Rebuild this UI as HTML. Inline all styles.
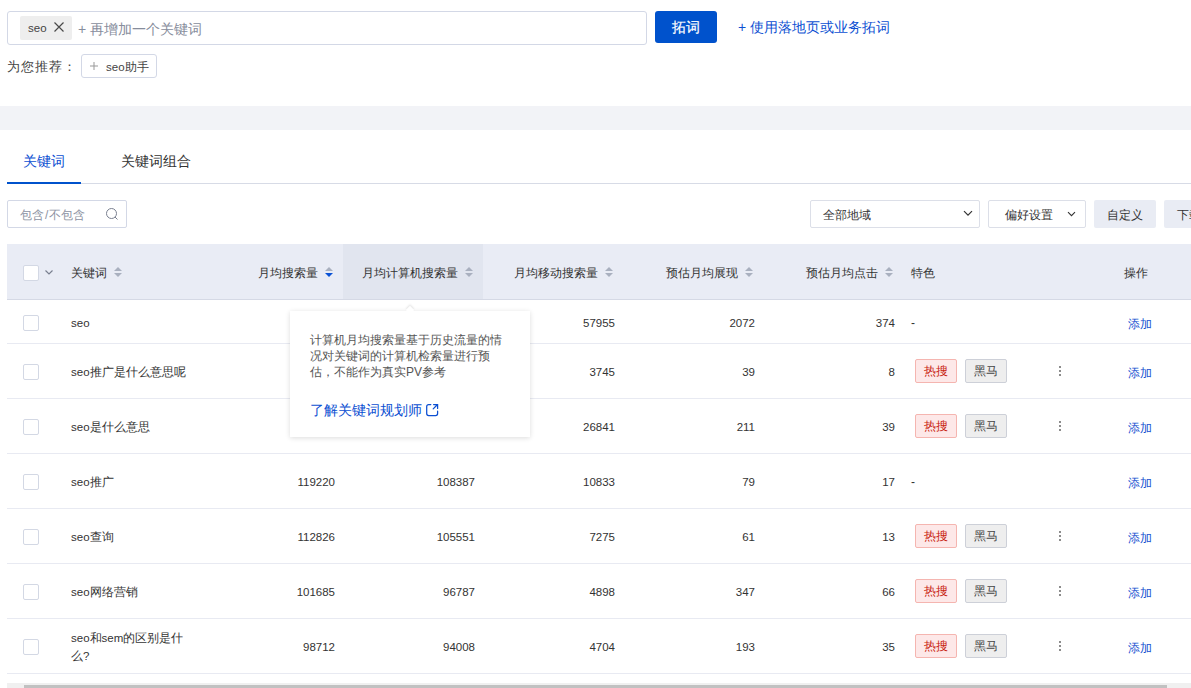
<!DOCTYPE html>
<html><head><meta charset="utf-8">
<style>
*{box-sizing:border-box;margin:0;padding:0}
html,body{width:1191px;height:688px;overflow:hidden;background:#fff;font-family:"Liberation Sans",sans-serif;color:#333;font-size:12px}
.a{position:absolute;white-space:nowrap}
.inp{left:7px;top:11px;width:640px;height:34px;border:1px solid #d3d8e6;border-radius:3px}
.tag{left:20px;top:16px;width:52px;height:24px;background:#eeeeee;border-radius:2px}
.btn{left:655px;top:11px;width:62px;height:32px;background:#0052cc;border-radius:3px;color:#fff;font-size:14px;text-align:center;line-height:32px;-webkit-text-stroke:0.2px #fff}
.band{left:0;top:106px;width:1191px;height:24px;background:#f2f3f7}
.tabline{left:7px;top:183px;width:1184px;height:1px;background:#d7dbe6}
.tabact{left:7px;top:182px;width:74px;height:2px;background:#0052cc}
.search{left:7px;top:200px;width:120px;height:28px;border:1px solid #d3d8e6;border-radius:2px}
.sel{top:200px;height:28px;border:1px solid #dcdfe8;border-radius:2px}
.gbtn{top:200px;height:28px;background:#e9ecf4;border-radius:2px}
.thead{left:7px;top:244px;width:1184px;height:56px;background:#e9ecf5;border-bottom:1px solid #d5d9e5}
.sortcol{left:343px;top:244px;width:140px;height:55px;background:#e1e5ef}
.rowline{left:7px;width:1184px;height:1px;background:#e8eaf2}
.cb{left:23px;width:16px;height:16px;border:1px solid #d3d8e4;border-radius:2px;background:#fff}
.th{top:265px;font-size:12px;color:#333;line-height:16px}
.td{font-size:12px;color:#333;line-height:16px}
.num{text-align:right;width:120px;font-size:11.5px;margin-top:1px}
.l{font-size:11.5px}
.hot{left:915px;width:42px;height:24px;background:#fde8e8;border:1px solid #f5b5b0;border-radius:2px;color:#c8200e;text-align:center;line-height:22px;font-size:12px}
.dark{left:965px;width:42px;height:24px;background:#eeeeee;border:1px solid #cdd0d8;border-radius:2px;color:#444;text-align:center;line-height:22px;font-size:12px}
.add{left:1128px;color:#1450d0;font-size:12px;line-height:16px}
.dots{left:1059px;width:2px}
.dots i{display:block;width:2px;height:2px;background:#8c8c8c;margin-bottom:2px}
.link{color:#0c4fd2}
</style></head><body>
<!-- top input -->
<div class="a inp"></div>
<div class="a tag"></div>
<div class="a" style="left:28px;top:20px;font-size:11.5px;line-height:16px;color:#444">seo</div>
<svg class="a" style="left:53px;top:21px" width="12" height="12" viewBox="0 0 12 12"><path d="M1.5 1.5L10.5 10.5M10.5 1.5L1.5 10.5" stroke="#4a4a4a" stroke-width="1.2"/></svg>
<div class="a" style="left:78px;top:20px;font-size:14px;line-height:18px;color:#878d9c">+ 再增加一个关键词</div>
<div class="a btn">拓词</div>
<div class="a link" style="left:738px;top:18px;font-size:14px;line-height:18px">+ 使用落地页或业务拓词</div>
<!-- recommend -->
<div class="a" style="left:7px;top:58px;font-size:13px;line-height:18px;color:#444;letter-spacing:1px">为您推荐：</div>
<div class="a" style="left:81px;top:54px;width:76px;height:24px;border:1px solid #d3d8e6;border-radius:3px"></div>
<svg class="a" style="left:90px;top:62px" width="8" height="8" viewBox="0 0 8 8"><path d="M4 0V8M0 4H8" stroke="#999" stroke-width="1"/></svg>
<div class="a" style="left:106px;top:59px;font-size:12px;line-height:16px;color:#444"><span class="l">seo</span>助手</div>

<div class="a band"></div>
<!-- tabs -->
<div class="a" style="left:23px;top:152px;font-size:14px;line-height:18px;color:#0c4fd2">关键词</div>
<div class="a" style="left:121px;top:152px;font-size:14px;line-height:18px;color:#333">关键词组合</div>
<div class="a tabline"></div>
<div class="a tabact"></div>
<!-- filter bar -->
<div class="a search"></div>
<div class="a" style="left:20px;top:207px;font-size:12px;line-height:16px;color:#8d93a3">包含<span style="margin:0 1px 0 1px">/</span>不包含</div>
<svg class="a" style="left:105px;top:207px" width="14" height="14" viewBox="0 0 14 14"><circle cx="6.5" cy="6.5" r="5" fill="none" stroke="#7a8090" stroke-width="1"/><path d="M10 10L12.5 12.5" stroke="#7a8090" stroke-width="1"/></svg>

<div class="a sel" style="left:810px;width:170px"></div>
<div class="a" style="left:823px;top:207px;font-size:12px;line-height:16px;color:#333">全部地域</div>
<svg class="a" style="left:963px;top:210px" width="10" height="7" viewBox="0 0 10 7"><path d="M1 1.2L5 5.2L9 1.2" fill="none" stroke="#333" stroke-width="1.2"/></svg>
<div class="a sel" style="left:988px;width:98px"></div>
<div class="a" style="left:1005px;top:207px;font-size:12px;line-height:16px;color:#333">偏好设置</div>
<svg class="a" style="left:1067px;top:211px" width="9" height="6" viewBox="0 0 9 6"><path d="M1 1.2L4.5 4.7L8 1.2" fill="none" stroke="#333" stroke-width="1.1"/></svg>
<div class="a gbtn" style="left:1094px;width:62px"></div>
<div class="a" style="left:1107px;top:207px;font-size:12px;line-height:16px;color:#333">自定义</div>
<div class="a gbtn" style="left:1164px;width:62px"></div>
<div class="a" style="left:1177px;top:207px;font-size:12px;line-height:16px;color:#333">下载</div>

<!-- table head -->
<div class="a thead"></div>
<div class="a sortcol"></div>
<div class="a cb" style="top:265px"></div>
<svg class="a" style="left:45px;top:270px" width="8" height="5" viewBox="0 0 8 5"><path d="M0.5 0.5L4 4L7.5 0.5" fill="none" stroke="#7a8090" stroke-width="1.2"/></svg>
<div class="a th" style="left:71px">关键词</div>
<div class="a th" style="left:258px">月均搜索量</div>
<div class="a th" style="left:362px">月均计算机搜索量</div>
<div class="a th" style="left:514px">月均移动搜索量</div>
<div class="a th" style="left:666px">预估月均展现</div>
<div class="a th" style="left:806px">预估月均点击</div>
<div class="a th" style="left:911px">特色</div>
<div class="a th" style="left:1124px">操作</div>

<svg class="a" style="left:114px;top:266px" width="8" height="12" viewBox="0 0 8 12"><path d="M0 5L8 5L4 1Z" fill="#a9b0bf"/><path d="M0 7L8 7L4 11Z" fill="#a9b0bf"/></svg>
<svg class="a" style="left:325px;top:266px" width="8" height="12" viewBox="0 0 8 12"><path d="M0 5L8 5L4 1Z" fill="#a9b0bf"/><path d="M0 7L8 7L4 11Z" fill="#0a52d6"/></svg>
<svg class="a" style="left:465px;top:266px" width="8" height="12" viewBox="0 0 8 12"><path d="M0 5L8 5L4 1Z" fill="#a9b0bf"/><path d="M0 7L8 7L4 11Z" fill="#a9b0bf"/></svg>
<svg class="a" style="left:605px;top:266px" width="8" height="12" viewBox="0 0 8 12"><path d="M0 5L8 5L4 1Z" fill="#a9b0bf"/><path d="M0 7L8 7L4 11Z" fill="#a9b0bf"/></svg>
<svg class="a" style="left:745px;top:266px" width="8" height="12" viewBox="0 0 8 12"><path d="M0 5L8 5L4 1Z" fill="#a9b0bf"/><path d="M0 7L8 7L4 11Z" fill="#a9b0bf"/></svg>
<svg class="a" style="left:885px;top:266px" width="8" height="12" viewBox="0 0 8 12"><path d="M0 5L8 5L4 1Z" fill="#a9b0bf"/><path d="M0 7L8 7L4 11Z" fill="#a9b0bf"/></svg>
<!-- rows -->
<!--ROWS-->
<div class="a rowline" style="top:343px"></div>
<div class="a cb" style="top:315px"></div>
<div class="a td" style="left:71px;top:315px"><span class=l>seo</span></div>
<div class="a td num" style="left:495px;top:314px">57955</div>
<div class="a td num" style="left:635px;top:314px">2072</div>
<div class="a td num" style="left:775px;top:314px">374</div>
<div class="a td" style="left:911px;top:315px">-</div>
<div class="a add" style="top:316px">添加</div>
<div class="a rowline" style="top:398px"></div>
<div class="a cb" style="top:364px"></div>
<div class="a td" style="left:71px;top:364px"><span class=l>seo</span>推广是什么意思呢</div>
<div class="a td num" style="left:495px;top:363px">3745</div>
<div class="a td num" style="left:635px;top:363px">39</div>
<div class="a td num" style="left:775px;top:363px">8</div>
<div class="a hot" style="top:359px">热搜</div>
<div class="a dark" style="top:359px">黑马</div>
<div class="a dots" style="top:366px"><i></i><i></i><i></i></div>
<div class="a add" style="top:365px">添加</div>
<div class="a rowline" style="top:453px"></div>
<div class="a cb" style="top:419px"></div>
<div class="a td" style="left:71px;top:419px"><span class=l>seo</span>是什么意思</div>
<div class="a td num" style="left:495px;top:418px">26841</div>
<div class="a td num" style="left:635px;top:418px">211</div>
<div class="a td num" style="left:775px;top:418px">39</div>
<div class="a hot" style="top:414px">热搜</div>
<div class="a dark" style="top:414px">黑马</div>
<div class="a dots" style="top:421px"><i></i><i></i><i></i></div>
<div class="a add" style="top:420px">添加</div>
<div class="a rowline" style="top:508px"></div>
<div class="a cb" style="top:474px"></div>
<div class="a td" style="left:71px;top:474px"><span class=l>seo</span>推广</div>
<div class="a td num" style="left:215px;top:473px">119220</div>
<div class="a td num" style="left:355px;top:473px">108387</div>
<div class="a td num" style="left:495px;top:473px">10833</div>
<div class="a td num" style="left:635px;top:473px">79</div>
<div class="a td num" style="left:775px;top:473px">17</div>
<div class="a td" style="left:911px;top:474px">-</div>
<div class="a add" style="top:475px">添加</div>
<div class="a rowline" style="top:563px"></div>
<div class="a cb" style="top:529px"></div>
<div class="a td" style="left:71px;top:529px"><span class=l>seo</span>查询</div>
<div class="a td num" style="left:215px;top:528px">112826</div>
<div class="a td num" style="left:355px;top:528px">105551</div>
<div class="a td num" style="left:495px;top:528px">7275</div>
<div class="a td num" style="left:635px;top:528px">61</div>
<div class="a td num" style="left:775px;top:528px">13</div>
<div class="a hot" style="top:524px">热搜</div>
<div class="a dark" style="top:524px">黑马</div>
<div class="a dots" style="top:531px"><i></i><i></i><i></i></div>
<div class="a add" style="top:530px">添加</div>
<div class="a rowline" style="top:618px"></div>
<div class="a cb" style="top:584px"></div>
<div class="a td" style="left:71px;top:584px"><span class=l>seo</span>网络营销</div>
<div class="a td num" style="left:215px;top:583px">101685</div>
<div class="a td num" style="left:355px;top:583px">96787</div>
<div class="a td num" style="left:495px;top:583px">4898</div>
<div class="a td num" style="left:635px;top:583px">347</div>
<div class="a td num" style="left:775px;top:583px">66</div>
<div class="a hot" style="top:579px">热搜</div>
<div class="a dark" style="top:579px">黑马</div>
<div class="a dots" style="top:586px"><i></i><i></i><i></i></div>
<div class="a add" style="top:585px">添加</div>
<div class="a rowline" style="top:673px"></div>
<div class="a cb" style="top:639px"></div>
<div class="a td" style="left:71px;top:629px;white-space:normal;width:120px;line-height:18px"><span class=l>seo</span>和<span class=l>sem</span>的区别是什<br>么<span class=l>?</span></div>
<div class="a td num" style="left:215px;top:638px">98712</div>
<div class="a td num" style="left:355px;top:638px">94008</div>
<div class="a td num" style="left:495px;top:638px">4704</div>
<div class="a td num" style="left:635px;top:638px">193</div>
<div class="a td num" style="left:775px;top:638px">35</div>
<div class="a hot" style="top:634px">热搜</div>
<div class="a dark" style="top:634px">黑马</div>
<div class="a dots" style="top:641px"><i></i><i></i><i></i></div>
<div class="a add" style="top:640px">添加</div>
<div class="a tip" style="left:290px;top:311px;width:240px;height:126px;background:#fff;box-shadow:0 1px 5px rgba(0,0,0,0.14)"></div>
<div class="a" style="left:407px;top:307px;width:6px;height:6px;background:#fff;transform:rotate(45deg);box-shadow:-1px -1px 2px rgba(0,0,0,0.10)"></div>
<div class="a" style="left:398px;top:311px;width:24px;height:10px;background:#fff"></div>
<div class="a" style="left:310px;top:332px;width:200px;white-space:normal;font-size:12px;line-height:16px;color:#555">计算机月均搜索量基于历史流量的情况对关键词的计算机检索量进行预估，不能作为真实PV参考</div>
<div class="a link" style="left:310px;top:401px;font-size:14px;line-height:18px">了解关键词规划师</div>
<svg class="a" style="left:420px;top:398px" width="25" height="24" viewBox="0 0 25 24"><path d="M10.8 6.5H8.7Q6.7 6.5 6.7 8.5V15.5Q6.7 17.5 8.7 17.5H15.6Q17.6 17.5 17.6 15.5V13.2M13.6 6.5H17.6V10.4M17.3 6.8L13.2 10.9" fill="none" stroke="#0c4fd2" stroke-width="1.25" stroke-linecap="round"/></svg>
<!--/ROWS-->

<!-- scrollbar -->
<div class="a" style="left:7px;top:683px;width:1184px;height:5px;background:#f0f0f0"></div>
<div class="a" style="left:24px;top:685px;width:1143px;height:3px;background:#c1c1c1"></div>
</body></html>
